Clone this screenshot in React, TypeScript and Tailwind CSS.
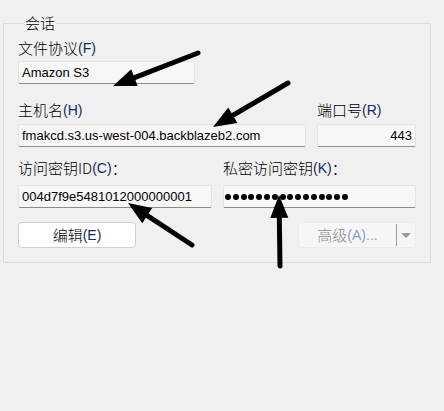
import React from 'react';

const cjk = "font-['Noto_Sans_CJK_SC','Noto_Sans',sans-serif] font-light";
const latin = "font-['Liberation_Sans','Noto_Sans_CJK_SC',sans-serif]";

// 标签：中文 + 快捷键
const Label = ({ text, hotkey, colon }: { text: string; hotkey: string; colon?: boolean }) => (
  <div className="h-[20px] flex items-center whitespace-nowrap text-black">
    <span className={`${cjk} text-[15px] leading-[20px]`}>{text}</span>
    <span className={`${latin} text-[14px] leading-[20px] text-[#14285a]`}>({hotkey})</span>
    {colon && <span className={`${cjk} text-[15px] leading-[20px]`}>：</span>}
  </div>
);

const Field = ({ children, className = '' }: { children?: React.ReactNode; className?: string }) => (
  <div
    className={`h-[23px] flex items-center px-[3px] bg-[#f7f7f7] border border-[#e3e3e3] border-b-[#8b8b8b] rounded-[2px] ${latin} text-[13px] text-black ${className}`}
  >
    {children}
  </div>
);

type Pt = [number, number];

const Arrow = ({ tail, tip }: { tail: Pt; tip: Pt }) => {
  const dx = tip[0] - tail[0];
  const dy = tip[1] - tail[1];
  const len = Math.hypot(dx, dy);
  const ux = dx / len;
  const uy = dy / len;
  const headLen = 23;
  const half = 9;
  const bx = tip[0] - ux * headLen;
  const by = tip[1] - uy * headLen;
  const w1: Pt = [bx - uy * half, by + ux * half];
  const w2: Pt = [bx + uy * half, by - ux * half];
  const sx = tip[0] - ux * (headLen - 4);
  const sy = tip[1] - uy * (headLen - 4);
  return (
    <g>
      <line x1={tail[0]} y1={tail[1]} x2={sx} y2={sy} stroke="#000" strokeWidth={5} strokeLinecap="round" />
      <polygon points={`${tip[0]},${tip[1]} ${w1[0]},${w1[1]} ${w2[0]},${w2[1]}`} fill="#000" />
    </g>
  );
};

const App = () => {
  return (
    <div className="relative w-[444px] h-[411px] bg-[#f0f0f0] overflow-hidden">
      <div className="pl-[3px] pt-[13px] w-[431px]">
        <fieldset className="border border-[#dcdcdc] px-[14px] pb-[14px]">
          <legend className={`${cjk} ml-[6px] px-[1px] text-[15px] leading-[20px] text-black`}>会话</legend>

          <div className="mt-[5px]">
            <Label text="文件协议" hotkey="F" />
            <Field className="mt-[3px] w-[177px]">Amazon S3</Field>
          </div>

          <div className="mt-[16px] flex gap-[11px]">
            <div className="w-[288px]">
              <Label text="主机名" hotkey="H" />
              <Field className="mt-[4px]">fmakcd.s3.us-west-004.backblazeb2.com</Field>
            </div>
            <div className="w-[99px]">
              <Label text="端口号" hotkey="R" />
              <Field className="mt-[4px] justify-end">443</Field>
            </div>
          </div>

          <div className="mt-[11px] flex gap-[11px]">
            <div className="w-[194px]">
              <Label text="访问密钥ID" hotkey="C" colon />
              <Field className="mt-[7px]">004d7f9e5481012000000001</Field>
            </div>
            <div className="w-[193px]">
              <Label text="私密访问密钥" hotkey="K" colon />
              <Field className="mt-[7px] pl-[1px] gap-[1.8px]">
                {Array.from({ length: 16 }).map((_, i) => (
                  <span key={i} className="w-[6px] h-[6px] rounded-full bg-black" />
                ))}
              </Field>
            </div>
          </div>

          <div className="mt-[14px] flex justify-between">
            <button className="w-[118px] h-[26px] bg-white border border-[#d0d0d0] rounded-[4px] flex items-center justify-center text-black">
              <span className={`${cjk} text-[15px]`}>编辑</span>
              <span className={`${latin} text-[14px] text-[#14285a]`}>(E)</span>
            </button>
            <div className="w-[118px] h-[26px] bg-[#f6f6f6] border border-[#ebebeb] rounded-[4px] flex items-center text-[#8a8a8a]">
              <div className="flex-1 flex items-center justify-center">
                <span className={`${cjk} text-[15px]`}>高级</span>
                <span className={`${latin} text-[14px] text-[#8aa0c8]`}>(A)...</span>
              </div>
              <div className="w-px h-[22px] bg-[#9a9a9a]" />
              <svg width="18" height="10" viewBox="0 0 18 10" className="shrink-0">
                <polygon points="4,3 14,3 9,8" fill="#9a9a9a" />
              </svg>
            </div>
          </div>
        </fieldset>
      </div>

      <svg className="absolute inset-0 pointer-events-none" width="444" height="411">
        <Arrow tail={[198, 53]} tip={[113, 86]} />
        <Arrow tail={[288, 83]} tip={[213, 127]} />
        <Arrow tail={[192, 245]} tip={[128, 203]} />
        <Arrow tail={[280, 266]} tip={[279, 195]} />
      </svg>
    </div>
  );
};

export default App;
